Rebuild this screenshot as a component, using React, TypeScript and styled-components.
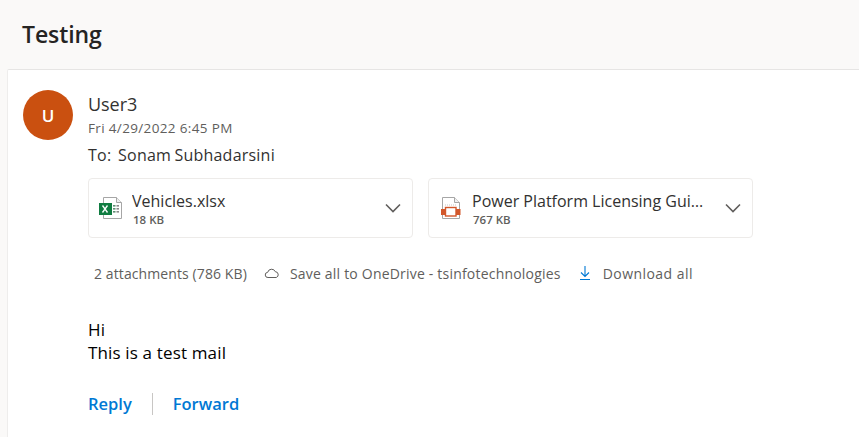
import React from 'react';
import styled, { createGlobalStyle } from 'styled-components';

const GlobalStyle = createGlobalStyle`
  html, body {
    margin: 0;
    padding: 0;
    background: #faf9f8;
    font-family: 'Open Sans', 'Liberation Sans', sans-serif;
    overflow: hidden;
  }
`;

const Page = styled.div`
  width: 859px;
  height: 437px;
  display: flex;
  flex-direction: column;
  overflow: hidden;
`;

const Subject = styled.h1`
  margin: 0;
  height: 69px;
  box-sizing: border-box;
  padding: 18px 0 0 22px;
  font-size: 23px;
  line-height: 32px;
  font-weight: 600;
  letter-spacing: -0.1px;
  color: #252423;
`;

const Card = styled.div`
  flex: 1;
  margin-left: 7px;
  background: #fff;
  border-top: 1px solid #e6e5e4;
  border-left: 1px solid #eeedec;
  border-radius: 2px 0 0 0;
  display: flex;
  padding: 20px 0 0 15px;
  gap: 15px;
`;

const Avatar = styled.div`
  width: 50px;
  height: 50px;
  flex: none;
  border-radius: 50%;
  background: #ca5010;
  color: #fff;
  font-size: 17px;
  font-weight: 600;
  display: flex;
  align-items: center;
  justify-content: center;
`;

const Content = styled.div`
  flex: 1;
  min-width: 0;
`;

const Sender = styled.div`
  font-size: 18px;
  line-height: 24px;
  margin-top: 2px;
  letter-spacing: -0.05px;
  color: #323130;
`;

const DateLine = styled.div`
  font-size: 13.5px;
  line-height: 18px;
  margin-top: 3px;
  letter-spacing: 0.35px;
  color: #605e5c;
`;

const ToLine = styled.div`
  margin-top: 8px;
  font-size: 16px;
  line-height: 20px;
  letter-spacing: 0.22px;
  word-spacing: -1px;
  color: #323130;
  white-space: pre;
`;

const Attachments = styled.div`
  display: flex;
  gap: 15px;
  margin-top: 13px;
`;

const Attachment = styled.div`
  width: 325px;
  height: 60px;
  box-sizing: border-box;
  border: 1px solid #edebe9;
  border-radius: 4px;
  display: flex;
  align-items: center;
  padding: 0 10px;
`;

const FileIcon = styled.div`
  width: 24px;
  height: 24px;
  flex: none;
  margin-right: 9px;
`;

const FileInfo = styled.div`
  flex: 1;
  min-width: 0;
`;

const FileName = styled.div`
  font-size: 16px;
  line-height: 22px;
  color: #323130;
  white-space: nowrap;
  overflow: hidden;
  text-overflow: ellipsis;
`;

const FileSize = styled.div`
  font-size: 11.5px;
  line-height: 14px;
  margin-top: 1px;
  font-weight: 600;
  color: #605e5c;
  margin-left: 1px;
`;

const Chevron = styled.svg`
  width: 16px;
  height: 10px;
  flex: none;
  margin-left: 13px;
  margin-right: 1px;
`;

const ActionRow = styled.div`
  display: flex;
  align-items: center;
  height: 20px;
  margin-top: 25px;
  margin-left: 6px;
  font-size: 14px;
  color: #605e5c;
  white-space: nowrap;
`;

const ActionLabel = styled.span<{ $tracking: number }>`
  letter-spacing: ${(p) => p.$tracking}px;
`;

const ActionItem = styled.div<{ $gap: number; $inner: number }>`
  display: flex;
  align-items: center;
  margin-left: ${(p) => p.$gap}px;
  gap: ${(p) => p.$inner}px;
`;

const Body = styled.div`
  margin-top: 35px;
  font-size: 17px;
  line-height: 23px;
  letter-spacing: 0.15px;
  color: #000;
`;

const Links = styled.div`
  display: flex;
  align-items: center;
  margin-top: 29px;
`;

const LinkText = styled.a`
  font-size: 16.5px;
  font-weight: 600;
  line-height: 22px;
  color: #0078d4;
`;

const Divider = styled.div`
  width: 1px;
  height: 22px;
  background: #c8c6c4;
  margin: 0 20px;
`;

const ExcelIcon = () => (
  <svg viewBox="0 0 24 24" width="24" height="24">
    <path d="M4.5 1.5h13l5 5v16h-18z" fill="#fff" stroke="#a6a6a6" />
    <path d="M17.5 1.5v5h5" fill="#f0f0f0" stroke="#a6a6a6" />
    <rect x="14" y="9" width="2.5" height="1.6" fill="#5f8f73" />
    <rect x="17.5" y="9" width="2.5" height="1.6" fill="#8a8a8a" />
    <rect x="14" y="12" width="2.5" height="1.6" fill="#5f8f73" />
    <rect x="17.5" y="12" width="2.5" height="1.6" fill="#8a8a8a" />
    <rect x="14" y="15" width="2.5" height="1.6" fill="#5f8f73" />
    <rect x="17.5" y="15" width="2.5" height="1.6" fill="#8a8a8a" />
    <rect x="0" y="7" width="13" height="12" fill="#107c41" />
    <path d="M3.5 9.5l5 7M8.5 9.5l-5 7" stroke="#fff" strokeWidth="1.3" fill="none" />
  </svg>
);

const SlidesIcon = () => (
  <svg viewBox="0 0 24 24" width="24" height="24">
    <path d="M3.5 1.5h12l5 5v16h-17z" fill="#fff" stroke="#a6a6a6" />
    <path d="M15.5 1.5v5h5" fill="#f0f0f0" stroke="#a6a6a6" />
    <path d="M6 9h12" stroke="#c8c6c4" strokeDasharray="1 1" />
    <rect x="2" y="13" width="19.5" height="6" fill="#d2572b" />
    <rect x="6.5" y="11.5" width="10.5" height="8.5" fill="#fff" stroke="#d2572b" strokeWidth="1.4" />
  </svg>
);

const ChevronIcon = () => (
  <Chevron viewBox="0 0 16 10">
    <path d="M1 1.5l7 7 7-7" fill="none" stroke="#605e5c" strokeWidth="1.6" />
  </Chevron>
);

function App() {
  return (
    <>
      <GlobalStyle />
      <Page>
        <Subject>Testing</Subject>
        <Card>
          <Avatar>U</Avatar>
          <Content>
            <Sender>User3</Sender>
            <DateLine>Fri 4/29/2022 6:45 PM</DateLine>
            <ToLine>To:  Sonam Subhadarsini</ToLine>
            <Attachments>
              <Attachment>
                <FileIcon>
                  <ExcelIcon />
                </FileIcon>
                <FileInfo>
                  <FileName>Vehicles.xlsx</FileName>
                  <FileSize>18 KB</FileSize>
                </FileInfo>
                <ChevronIcon />
              </Attachment>
              <Attachment>
                <FileIcon>
                  <SlidesIcon />
                </FileIcon>
                <FileInfo>
                  <FileName>Power Platform Licensing Guide.pptx</FileName>
                  <FileSize>767 KB</FileSize>
                </FileInfo>
                <ChevronIcon />
              </Attachment>
            </Attachments>
            <ActionRow>
              <ActionLabel $tracking={0.1}>2 attachments (786 KB)</ActionLabel>
              <ActionItem $gap={17} $inner={10}>
                <svg viewBox="0 0 16 12" width="16" height="12">
                  <path
                    d="M4 10.5a2.6 2.6 0 0 1-.3-5.2 4 4 0 0 1 7.6-.6 3 3 0 0 1 1 5.8z"
                    fill="none"
                    stroke="#605e5c"
                    strokeWidth="1"
                  />
                </svg>
                <ActionLabel $tracking={0.2}>Save all to OneDrive - tsinfotechnologies</ActionLabel>
              </ActionItem>
              <ActionItem $gap={18} $inner={12}>
                <svg viewBox="0 0 12 16" width="12" height="16">
                  <path d="M6 1v10M2 7.5L6 11.5l4-4M1 14.5h10" fill="none" stroke="#0078d4" strokeWidth="1.1" />
                </svg>
                <ActionLabel $tracking={0.45}>Download all</ActionLabel>
              </ActionItem>
            </ActionRow>
            <Body>
              Hi
              <br />
              This is a test mail
            </Body>
            <Links>
              <LinkText>Reply</LinkText>
              <Divider />
              <LinkText>Forward</LinkText>
            </Links>
          </Content>
        </Card>
      </Page>
    </>
  );
}

export default App;
